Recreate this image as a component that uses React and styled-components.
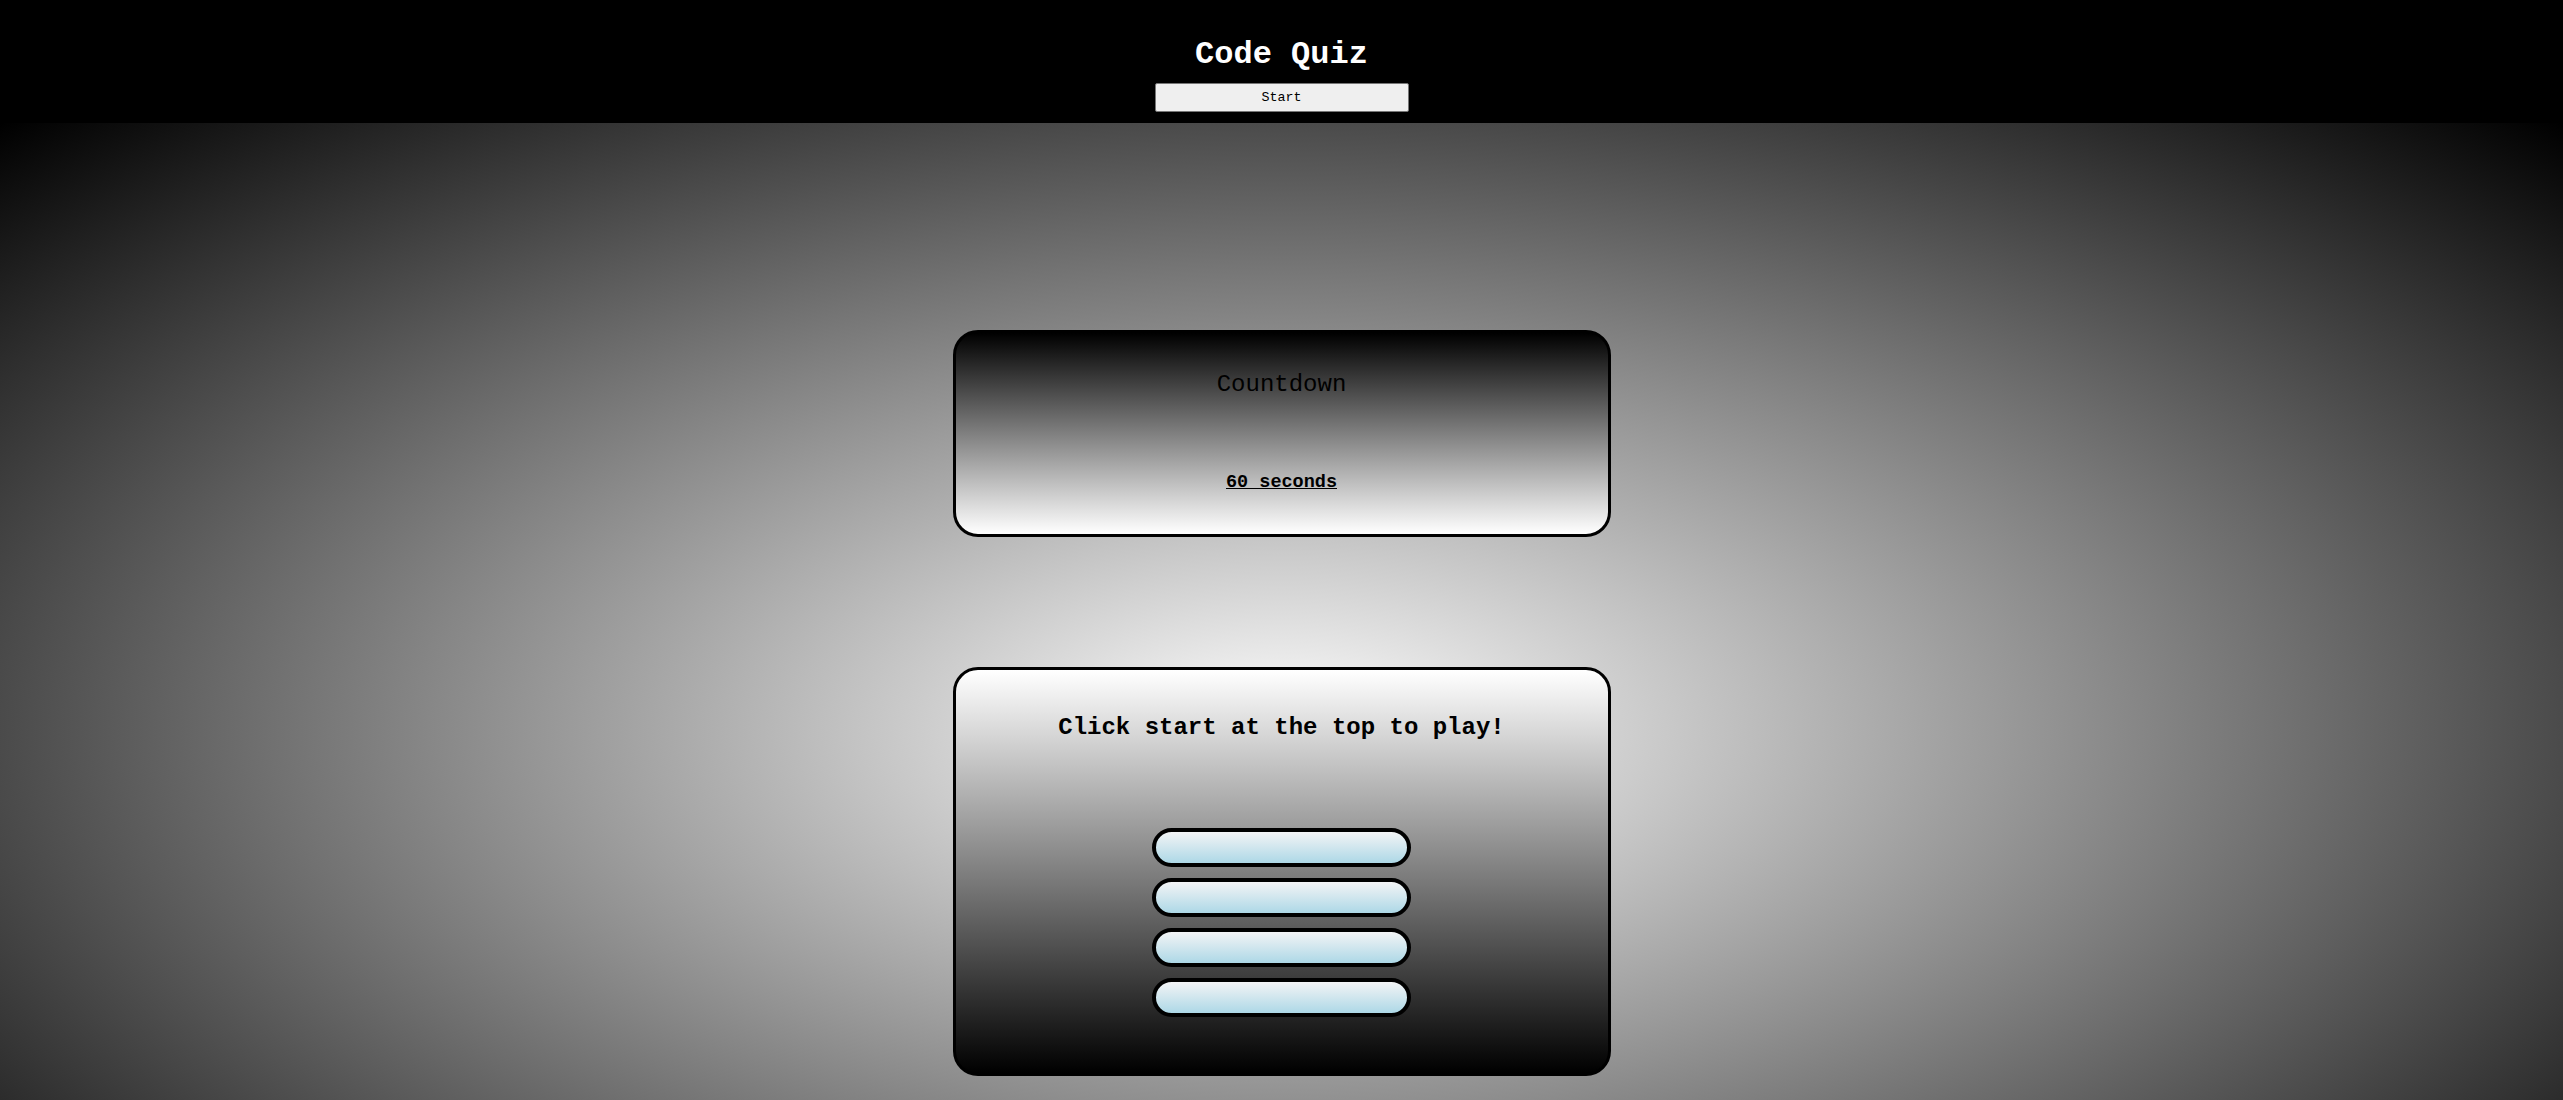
import React from "react";
import styled, { createGlobalStyle } from "styled-components";

const GlobalStyle = createGlobalStyle`
  html, body {
    margin: 0;
    padding: 0;
  }
  body {
    font-family: "Liberation Mono", "Courier New", monospace;
    background: #000;
  }
  * {
    box-sizing: border-box;
  }
`;

const App = () => {
  const answers = [1, 2, 3, 4];

  return (
    <>
      <GlobalStyle />
      <Header>
        <Title>Code Quiz</Title>
        <StartBtn>Start</StartBtn>
      </Header>
      <Main>
        <TimerCard>
          <TimerLabel>Countdown</TimerLabel>
          <Seconds>60 seconds</Seconds>
        </TimerCard>
        <QuizCard>
          <Question>Click start at the top to play!</Question>
          <AnswerList>
            {answers.map((a) => (
              <AnswerBtn key={a} />
            ))}
          </AnswerList>
        </QuizCard>
      </Main>
    </>
  );
};

export default App;

const Header = styled.header`
  background: #000;
  height: 123px;
  padding-top: 37px;
  display: flex;
  flex-direction: column;
  align-items: center;
`;

const Title = styled.h1`
  margin: 0;
  color: #fff;
  font-family: "Liberation Mono", "Courier New", monospace;
  font-size: 32px;
  line-height: 36px;
  font-weight: 700;
`;

const StartBtn = styled.button`
  margin-top: 10px;
  width: 254px;
  height: 29px;
  background: #efefef;
  border: 1px solid #767676;
  border-radius: 2px;
  color: #000;
  font-family: "Liberation Mono", "Courier New", monospace;
  font-size: 13.33px;
  cursor: pointer;
`;

const Main = styled.main`
  height: 1214px;
  padding-top: 207px;
  display: flex;
  flex-direction: column;
  align-items: center;
  gap: 130px;
  background: radial-gradient(#fff, #000);
`;

const Card = styled.section`
  width: 658px;
  border: 3px solid #000;
  border-radius: 25px;
  display: flex;
  flex-direction: column;
  align-items: center;
`;

const TimerCard = styled(Card)`
  height: 207px;
  padding-top: 38px;
  background: linear-gradient(to bottom, #000, #fff);
`;

const TimerLabel = styled.h2`
  margin: 0;
  font-size: 24px;
  line-height: 28px;
  font-weight: 400;
  color: #000;
`;

const Seconds = styled.p`
  margin: 73px 0 0;
  font-size: 18.5px;
  line-height: 22px;
  font-weight: 700;
  text-decoration: underline;
  color: #000;
`;

const QuizCard = styled(Card)`
  height: 409px;
  padding-top: 44px;
  background: linear-gradient(to bottom, #fff, #000);
`;

const Question = styled.h2`
  margin: 0;
  font-size: 24px;
  line-height: 28px;
  font-weight: 700;
  color: #000;
`;

const AnswerList = styled.div`
  margin-top: 86px;
  display: flex;
  flex-direction: column;
  gap: 11px;
`;

const AnswerBtn = styled.button`
  width: 259px;
  height: 39px;
  border: 4px solid #000;
  border-radius: 20px;
  background: linear-gradient(to bottom, #f3f4f6, #add8e6);
  cursor: pointer;
`;
